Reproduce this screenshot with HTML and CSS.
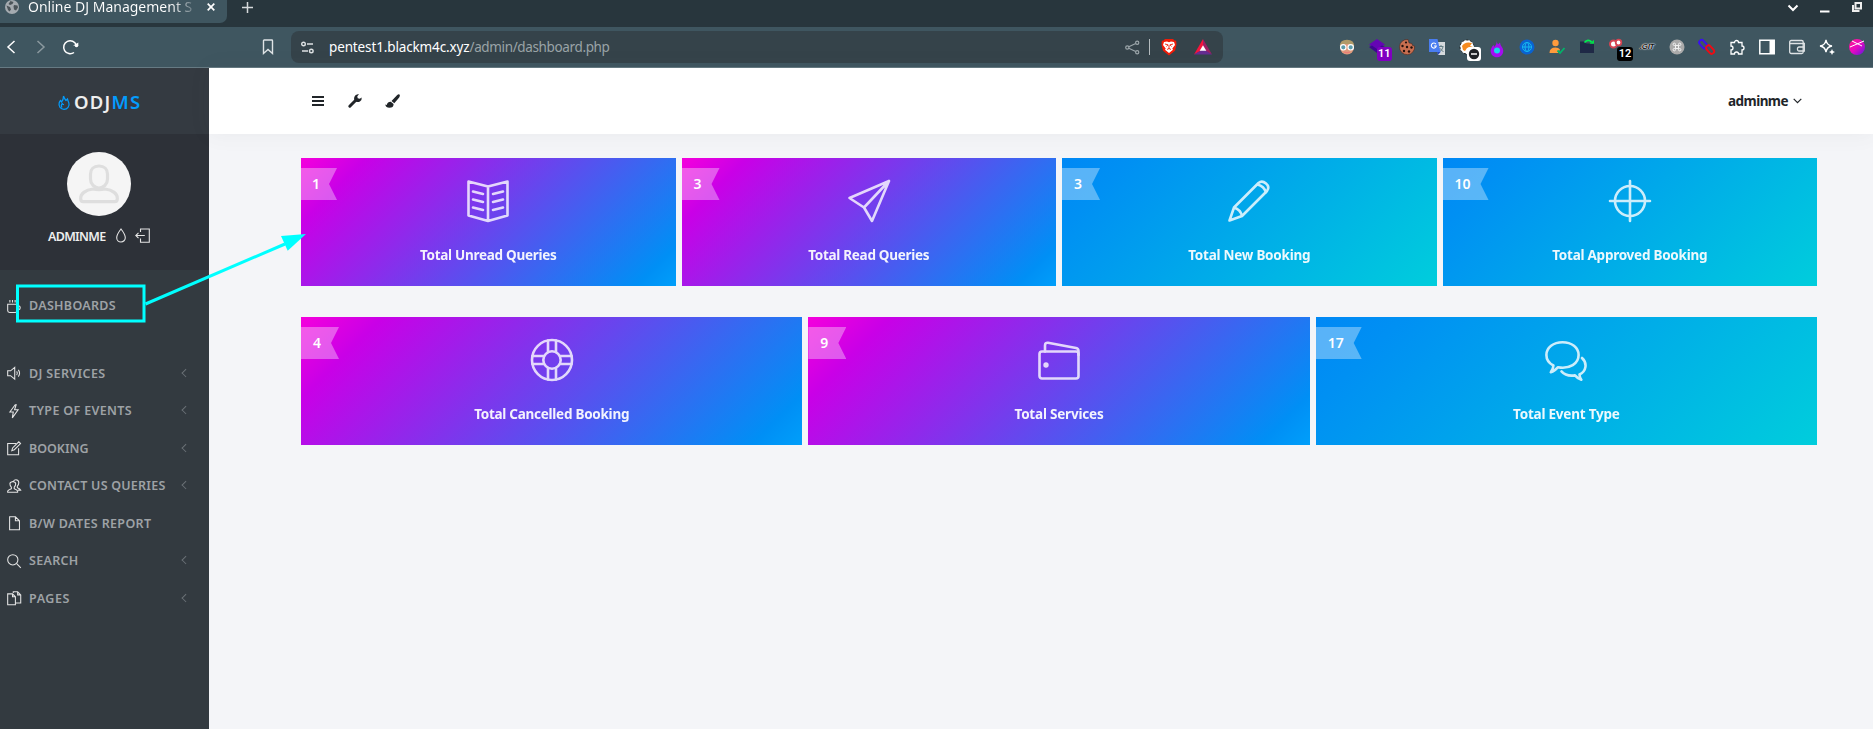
FILE: index.html
```html
<!DOCTYPE html>
<html lang="en">
<head>
<meta charset="utf-8">
<title>Online DJ Management System</title>
<link rel="stylesheet" href="styles.css">
</head>
<body>
<header class="browser">
  <div class="tabstrip">
    <div class="tab">
      <svg class="tab-globe" viewBox="0 0 14 14"><circle cx="7" cy="7" r="7" fill="#a5abb0"/><path d="M1.5 5.5L5 7l1 2.500-1.500 2L3 10zM5.500 1l3 1-1 2-2.500 1L3.500 4zM9 5l3.500.5.5 2-2 3-2-1-.5-3z" fill="#4b5459"/></svg>
      <span class="tab-title">Online DJ Management S</span>
      <svg class="tab-close" viewBox="0 0 8 8"><path d="M.7.700l6.600 6.600M7.300.7L.7 7.300" stroke="#fff" stroke-width="1.700"/></svg>
    </div>
    <svg class="new-tab" viewBox="0 0 11 11"><path d="M5.500 0v11M0 5.500h11" stroke="#d6dadc" stroke-width="1.500"/></svg>
    <div class="win-controls">
      <svg width="12" height="12" viewBox="0 0 12 12"><path d="M1.500 4.500L6 9l4.500-4.500" fill="none" stroke="#fff" stroke-width="2"/></svg>
      <svg width="12" height="12" viewBox="0 0 12 12"><path d="M1 10.500h9.500" stroke="#fff" stroke-width="2"/></svg>
      <svg width="12" height="12" viewBox="0 0 12 12"><path d="M4.500 2h5.500v5.500H4.500z M2 4v6h6.500" fill="none" stroke="#eee" stroke-width="2"/></svg>
    </div>
  </div>
  <div class="toolbar">
    <div class="nav-btns">
      <svg width="10" height="14" viewBox="0 0 10 14"><path d="M8.500 1L2 7l6.500 6" fill="none" stroke="#fff" stroke-width="1.500"/></svg>
      <svg width="10" height="14" viewBox="0 0 10 14"><path d="M1.500 1L8 7l-6.500 6" fill="none" stroke="#8b999f" stroke-width="1.500"/></svg>
      <svg width="17" height="16" viewBox="0 0 17 16"><path d="M12 13.500A6.500 6.500 0 1 1 14.300 6" fill="none" stroke="#fff" stroke-width="1.500"/><path d="M11 6.500h5.300V3.500l-1.500 1z" fill="#fff"/><circle cx="14.500" cy="6.500" r="1.800" fill="#fff"/></svg>
    </div>
    <svg class="bookmark" viewBox="0 0 12 16"><path d="M1.500 1.700q0-.7.700-.7h7.600q.7 0 .7.700V14.500L6 10.500 1.500 14.500z" fill="none" stroke="#dfe4e6" stroke-width="1.400"/></svg>
    <div class="urlbar">
      <svg class="tune" viewBox="0 0 13 13"><g fill="none" stroke="#dde1e3" stroke-width="1.400"><circle cx="2.500" cy="3" r="1.800"/><path d="M6 3h6M1 10h6"/><circle cx="10.300" cy="10" r="1.800"/></g></svg>
      <div class="url"><span class="host" data-w="140.500">pentest1.blackm4c.xyz</span><span class="path" data-w="140">/admin/dashboard.php</span></div>
      <div class="url-actions">
        <svg width="15" height="15" viewBox="0 0 15 15"><g fill="none" stroke="#9ca6aa" stroke-width="1.200"><circle cx="2.300" cy="7.500" r="1.600"/><circle cx="12.200" cy="2.800" r="1.600"/><circle cx="12.200" cy="12.200" r="1.600"/><path d="M3.800 6.800l6.900-3.300M3.800 8.200l6.900 3.300"/></g></svg>
        <i class="divider"></i>
        <svg class="brave" width="16" height="18" viewBox="0 0 16 18"><path d="M4 1h8l1.500 1.500 1.700.2.300 4-1.500 6L8 17.500 2 12.700.5 6.700l.3-4 1.700-.2z" fill="#f01c08"/><path d="M3 4l3-.5 2 .7 2-.7 3 .5 1 3-2.700 3.500.7 1.300L8 15l-4-3.200.7-1.300L2 7z" fill="#fff"/><path d="M4 6l3 .8L5.500 8.500M12 6l-3 .8 1.500 1.700M8 7v4M6 11.500l2-1 2 1" stroke="#f01c08" stroke-width=".9" fill="none"/></svg>
        <svg width="18" height="16" viewBox="0 0 18 16"><path d="M9 0L0 15.500 9 11z" fill="#f5153c"/><path d="M9 0l9 15.500L9 11z" fill="#9e1f63"/><path d="M0 15.500h18L9 10z" fill="#662d91"/><path d="M9 6.200l3.300 5.500H5.700z" fill="#fff"/></svg>
      </div>
    </div>
    <div class="extensions">
      <div class="ext"><svg viewBox="0 0 16 16"><circle cx="8" cy="8.500" r="7" fill="#e09a7c"/><path d="M.8 7Q1 .7 8 .7T15.200 7L12 5 4 5z" fill="#b09a68"/><circle cx="4.300" cy="8.300" r="2.700" fill="#5d9cab" stroke="#fff" stroke-width="1.200"/><circle cx="11.700" cy="8.300" r="2.700" fill="#5d9cab" stroke="#fff" stroke-width="1.200"/><path d="M5 13q3 1.500 6 0" stroke="#e77" fill="none"/></svg></div>
      <div class="ext"><svg viewBox="0 0 16 16"><path d="M8 0l8 5.500-8 5.500-8-5.500z" fill="#6405b4"/><path d="M0 8l3-1.500L8 10l5-3.500L16 8l-8 6z" fill="#3d0790"/></svg><b class="badge purple">11</b></div>
      <div class="ext"><svg viewBox="0 0 16 16"><path d="M9 .5A7.600 7.600 0 1 0 15.600 7l-2-.5-.8-2-2.800-.6z" fill="#c86f50" stroke="#492620" stroke-width=".6"/><g fill="#23110e"><circle cx="7" cy="3.500" r="1.100"/><circle cx="3.500" cy="7" r="1.200"/><circle cx="8" cy="8" r="1.200"/><circle cx="12.500" cy="8.500" r="1.200"/><circle cx="5" cy="12" r="1.200"/><circle cx="10" cy="12.500" r="1.200"/></g></svg></div>
      <div class="ext"><svg viewBox="0 0 16 16"><path d="M7 3h9v13H9z" fill="#d5d9dc"/><path d="M9.500 7.500h5M12 6v1.500M14 8q-1 4-4 5M10.500 9l4 4" stroke="#668087" fill="none"/><path d="M0 0h8.500l3 13H0z" fill="#4a7df0"/><path d="M8 13h3.500L9 16z" fill="#2a47b8"/><path d="M7 5.300A2.500 2.500 0 1 0 7.300 7H5" stroke="#fff" stroke-width="1.100" fill="none"/></svg></div>
      <div class="ext"><svg viewBox="0 0 16 16"><circle cx="8" cy="8" r="7" fill="#fff" stroke="#222" stroke-width="1" stroke-dasharray="2 2"/><path d="M3 7q3-5 10-3l-2 3 3 1-6 1-2 3-2-1z" fill="#f58a1f"/></svg><b class="badge white"><svg viewBox="0 0 14 14"><circle cx="7" cy="7" r="5.200" fill="#202226"/><path d="M4 7h6" stroke="#fff" stroke-width="1.500"/></svg></b></div>
      <div class="ext"><svg viewBox="0 0 16 16"><path d="M8 0q-1 3 1 5.500l2-2q0 2.500 2.500 5.500a6.300 6.300 0 1 1-11.500 1q1-3 2.500-4l1 2Q8 5 8 0" fill="#a50cf0"/><circle cx="8" cy="11.500" r="3" fill="#17d8e8"/></svg></div>
      <div class="ext"><svg viewBox="0 0 16 16"><circle cx="8" cy="8" r="7.500" fill="#0a63d0"/><g fill="none" stroke="#16b8ef"><circle cx="8" cy="8" r="4.500"/><ellipse cx="8" cy="8" rx="2" ry="4.500"/><path d="M3 8h10"/></g></svg></div>
      <div class="ext"><svg viewBox="0 0 16 16"><circle cx="6.500" cy="4" r="3.200" fill="#ff9a3c"/><path d="M.5 14q0-5.500 6-5.500 3 0 4.500 2L9 14z" fill="#ff9a3c"/><path d="M8.500 11.500l2.500 2.500 4.500-5" stroke="#00b56a" stroke-width="1.800" fill="none"/></svg></div>
      <div class="ext"><svg viewBox="0 0 16 16"><path d="M1 2.500h5l1.500 2H15V14H1z" fill="#1f2946"/><path d="M5.500 3.500q3.500-4 7-.5" stroke="#00f050" stroke-width="1.800" fill="none"/><path d="M10.500 4.800h4.500V.8z" fill="#00e048"/></svg></div>
      <div class="ext"><svg viewBox="0 0 16 16"><circle cx="4.500" cy="5" r="3.500" fill="#fff" stroke="#d54452" stroke-width="2"/><circle cx="9.500" cy="3.500" r="2.800" fill="#fff" stroke="#d54452" stroke-width="1.800"/></svg><b class="badge black">12</b></div>
      <div class="ext"><span class="git">.GIT</span></div>
      <div class="ext"><svg viewBox="0 0 16 16"><circle cx="8" cy="8" r="7.500" fill="#aaa"/><path d="M6.500 6.500h3v3h-3zM6.500 6.500H5.300a1.200 1.200 0 1 1 1.200-1.200zM9.500 6.500V5.300a1.200 1.200 0 1 1 1.200 1.200zM9.500 9.500h1.200a1.200 1.200 0 1 1-1.200 1.200zM6.500 9.500v1.200a1.200 1.200 0 1 1-1.200-1.200z" fill="none" stroke="#f2f2f2"/></svg></div>
      <div class="ext"><svg viewBox="0 0 16 16"><g fill="none" stroke-width="1.900"><rect x="-.5" y="2.500" width="9.500" height="5" rx="2.500" transform="rotate(48 4 5)" stroke="#3a10f0"/><rect x="6.300" y="8.300" width="9.500" height="5" rx="2.500" transform="rotate(48 11.300 10.800)" stroke="#f20a12"/></g></svg></div>
      <div class="ext"><svg viewBox="0 0 16 16"><path d="M2 3.500h3.500a2 2 0 1 1 4 0H13V7a2 2 0 1 1 0 4v4H9.500a2 2 0 0 0-4 0H2v-4a2 2 0 0 0 0-4z" fill="none" stroke="#fff" stroke-width="1.300"/></svg></div>
      <div class="ext"><svg viewBox="0 0 16 16"><path d="M.8 1.200h14.400v13.600H.8z" fill="none" stroke="#fff" stroke-width="1.500"/><path d="M10.500 1h5v14h-5z" fill="#fff"/></svg></div>
      <div class="ext"><svg viewBox="0 0 16 16"><g fill="none" stroke="#dfe3e5" stroke-width="1.300"><rect x=".7" y="1.500" width="13.500" height="13" rx="1.500"/><path d="M1 4.500h14.300V12H10a1.500 1.500 0 0 1-1.500-1.500v-1A1.500 1.500 0 0 1 10 8h5"/></g></svg></div>
      <div class="ext"><svg viewBox="0 0 16 16"><path d="M7 .8q.8 5.400 6 6.200-5.200.8-6 6.200-.8-5.400-6-6.200 5.200-.8 6-6.200z" fill="none" stroke="#fff" stroke-width="1.300"/><path d="M13 10q.4 2.600 3 3-2.600.4-3 3-.4-2.600-3-3 2.600-.4 3-3z" fill="#fff"/></svg></div>
      <div class="ext"><svg viewBox="0 0 16 16"><defs><linearGradient id="pf" x1="0" y1="0" x2="1" y2="1"><stop offset="0" stop-color="#ff1c8e"/><stop offset=".5" stop-color="#e808c0"/><stop offset="1" stop-color="#5a18e0"/></linearGradient></defs><circle cx="8" cy="8" r="8" fill="url(#pf)"/><path d="M1 8l14-6M3 2l10 5" stroke="#fff" stroke-width="1"/></svg></div>
    </div>
  </div>
</header>
<div class="app">
  <aside class="sidebar">
    <div class="brand">
      <svg width="12" height="15" viewBox="0 0 12 15"><path d="M5.500 1q1 3 2.500 4.500L9.500 4q.5 2 1.300 3.800c1.200 3.500-1.500 6.500-4.800 6.500S.2 11.500 1.200 8Q1.500 6.500 2.500 5.500l1 1.500Q5.500 5 5.500 1M4 12.500q-1.500-2 .3-4Q5 9.500 6 9.700" fill="none" stroke="#039cfd" stroke-width="1.200"/></svg>
      <span class="brand-name" data-w="67.500">ODJ<em>MS</em></span>
    </div>
    <div class="profile">
      <div class="avatar"><svg width="40" height="40" viewBox="0 0 40 40"><g fill="none" stroke="#dedede" stroke-width="3.200"><path d="M20 2c-5.500 0-8.500 3.500-8.500 8v5c0 5 4 9 8.500 9s8.500-4 8.500-9v-5c0-4.500-3-8-8.500-8z"/><path d="M14 25C6 26 1.700 30 1.700 34v1q0 2.600 2.600 2.600h31.400q2.600 0 2.600-2.600v-1c0-4-4.300-8-12.300-9q-6 1.500-12 0z"/></g></svg></div>
      <div class="profile-line">
        <span class="profile-name" data-w="57.500">ADMINME</span>
        <svg width="10" height="15" viewBox="0 0 10 15"><path d="M5 1Q.7 6.500.7 9.700a4.300 4.300 0 0 0 8.600 0Q9.300 6.500 5 1z" fill="none" stroke="#e4e4e4" stroke-width="1.100"/></svg>
        <svg class="logout" width="15" height="15" viewBox="0 0 15 15"><path d="M5.500 4V1h8.800v13.300H5.500v-3.800M.8 7.500h9M3.500 4.800L.8 7.500l2.700 2.700" fill="none" stroke="#e4e4e4" stroke-width="1.100"/></svg>
      </div>
    </div>
    <nav class="menu">
      <a class="item first"><svg viewBox="0 0 15 15"><path d="M.7 5.500h9.800V12q0 2-2 2h-5.800q-2 0-2-2zM10.500 7H12q1.700.3 1.700 2T12 11h-1.500M3 1v2.500M5.700 1v2.500M8.400 1v2.500"/></svg><span data-w="87">DASHBOARDS</span></a>
      <a class="item"><svg viewBox="0 0 15 15"><path d="M.7 5h3L8 1.500v12L3.700 10h-3zM10 5.500q1.500 2 0 4M11.700 4q2.600 3.500 0 7"/></svg><span data-w="76.500">DJ SERVICES</span><i></i></a>
      <a class="item"><svg viewBox="0 0 15 15"><path d="M8.500.8L3 8.200h3.500L5.500 14.300 11.500 6H7.800L9.500.8z"/></svg><span data-w="103">TYPE OF EVENTS</span><i></i></a>
      <a class="item"><svg viewBox="0 0 15 15"><path d="M9.500 2.500H.7v11.800H12V7.500M5 10l.8-2.800L12.200.8l1.800 1.800-6.400 6.400z"/></svg><span data-w="59.500">BOOKING</span><i></i></a>
      <a class="item"><svg viewBox="0 0 15 15"><path d="M4.500 8.500Q3 7 3 5t3-2.500S9 3 9 5 7.500 8.500 7.500 8.500V10q3 1 3.500 2.500v1.200H.7v-1.200Q1.500 11 4.500 10zM6.500 2.500Q7.500.7 9.200.7q3 0 3 3.200 0 2-1.500 3.500V9q3 1 3.500 2.500h-3"/></svg><span data-w="136.500">CONTACT US QUERIES</span><i></i></a>
      <a class="item"><svg viewBox="0 0 15 15"><path d="M2.700.8h6l4.200 4.200v9.300H2.700zM8.700.8V5h4.200"/></svg><span data-w="122.500">B/W DATES REPORT</span></a>
      <a class="item"><svg viewBox="0 0 15 15"><circle cx="6" cy="6" r="5.300"/><path d="M10 10l4.300 4.300"/></svg><span data-w="49.500">SEARCH</span><i></i></a>
      <a class="item"><svg viewBox="0 0 15 15"><path d="M.7 3h5l3 3v8.300h-8zM5.700 3v3h3M6.500 2V.8h4.500l3.200 3.200v8.500H9M11 .8V4h3.200"/></svg><span data-w="41">PAGES</span><i></i></a>
    </nav>
  </aside>
  <main class="main">
    <div class="topbar">
      <svg width="12" height="12" viewBox="0 0 12 12"><path d="M0 2h12M0 6h12M0 10h12" stroke="#212529" stroke-width="2"/></svg>
      <svg width="14" height="14" viewBox="0 0 14 14"><path d="M1.800 12.200L8 6" stroke="#212529" stroke-width="3" stroke-linecap="round"/><path d="M13.700 3.500a4 4 0 0 1-5.500 4.200A4 4 0 0 1 11 .3L9.300 2.300l.4 2 2 .5z" fill="#212529"/></svg>
      <svg class="brush" width="15" height="14" viewBox="0 0 15 14"><path d="M14.500.5q1 .8-.3 3L9.300 9.200 6.500 7 12 1.300q1.500-1.500 2.500-.8zM5.800 7.700l2.800 2.200q0 3.800-4.300 3.900Q1 13.800.2 10.500l1.500.5q1-3.500 4.100-3.300z" fill="#212529"/></svg>
      <div class="user"><span data-w="60">adminme</span><svg width="9" height="6" viewBox="0 0 9 6"><path d="M.7.800l3.800 3.800L8.300.8" fill="none" stroke="#212529" stroke-width="1.200"/></svg></div>
    </div>
    <div class="content">
      <section class="row">
        <div class="card pink"><b class="ribbon narrow">1</b><svg class="ico" viewBox="0 0 42 42"><path d="M21 6.500L1.500 1.500v34L21 41l19.500-5.500v-34zM21 6.500V41M6 11.500l10 2.500M6 19.500l10 2.500M6 27.500L16 30M36 11.500L26 14M36 19.500L26 22M36 27.500L26 30"/></svg><span data-w="136.500">Total Unread Queries</span></div>
        <div class="card pink"><b class="ribbon">3</b><svg class="ico" viewBox="0 0 42 42"><path d="M41 1L1.500 18 16 27.500 24 41zM41 1L16 27.500"/></svg><span data-w="121">Total Read Queries</span></div>
        <div class="card blue"><b class="ribbon">3</b><svg class="ico" viewBox="0 0 42 42"><path d="M1.500 40.500L6 27.500 30.500 3Q34 0 38 3.500T39 11L14 36zM6 27.500q6.500 2 8 8.500M29.500 4.500q6.500 1.500 8.500 8"/></svg><span data-w="122">Total New Booking</span></div>
        <div class="card blue"><b class="ribbon">10</b><svg class="ico" viewBox="0 0 42 42"><circle cx="21" cy="21" r="15"/><path d="M21 1v40M1 21h40"/></svg><span data-w="155">Total Approved Booking</span></div>
      </section>
      <section class="row">
        <div class="card pink"><b class="ribbon">4</b><svg class="ico" viewBox="0 0 42 42"><circle cx="21" cy="21" r="20"/><circle cx="21" cy="21" r="8.700"/><path d="M17 13V1.500M25 13V1.500M17 29v11.500M25 29v11.500M13 17H1.500M13 25H1.500M29 17h11.500M29 25h11.500"/></svg><span data-w="155">Total Cancelled Booking</span></div>
        <div class="card pink"><b class="ribbon">9</b><svg class="ico" viewBox="0 0 42 42"><rect x="1.500" y="12.500" width="39" height="27" rx="2.500"/><path d="M7 12.500V6.500q0-3 3-2.700L38 9q2.500.5 2.500 3v4"/><circle class="dot" cx="8" cy="26" r="2.700"/></svg><span data-w="89">Total Services</span></div>
        <div class="card blue"><b class="ribbon">17</b><svg class="ico" viewBox="0 0 42 42"><path d="M17.500 3.200C8.500 3.200 1.400 8.500 1.400 16c0 4.500 2.500 8.200 7 10.500 0 2.500-.9 4.500-2.600 6.700 3-.7 5.500-3 7-4.900 12 2.200 20.800-3.800 20.800-12.300 0-7.500-7-12.800-16.100-12.800z"/><path d="M37 19c5.500 5 4.500 13-2.500 16.500 0 2 .6 3.500 1.800 5.200-3-.7-4.800-2.500-6.300-4.300-6 .9-10.500-.5-13.500-4"/></svg><span data-w="106.500">Total Event Type</span></div>
      </section>
    </div>
  </main>
</div>
<svg class="annotation" viewBox="0 0 310 100"><rect x="17.500" y="56" width="126.500" height="35" fill="none" stroke="#0ff" stroke-width="3"/><path d="M145.500 74L285 14" stroke="#0ff" stroke-width="3"/><path d="M306 4l-25 2 6.700 14.700z" fill="#0ff"/></svg>
<script src="fit.js"></script>
</body>
</html>
```
FILE: fit.js
```js
// Tracks each label so that it fills its designed width.
document.querySelectorAll('[data-w]').forEach(function (el) {
  var n = el.textContent.length;
  var diff = parseFloat(el.dataset.w) - el.getBoundingClientRect().width;
  el.style.letterSpacing = (diff / n).toFixed(3) + 'px';
});
```
FILE: styles.css
```css
* { box-sizing: border-box; }
body { margin: 0; width: 1873px; height: 729px; overflow: hidden; position: relative; display: flex; flex-direction: column; font-family: "Noto Sans", "Open Sans", sans-serif; background: #f4f5f8; }
svg { display: block; flex: none; overflow: visible; }
em, i { font-style: normal; }

.browser { flex: none; height: 68px; }
.tabstrip { height: 27px; background: #28363d; display: flex; align-items: flex-start; }
.tab { width: 227px; height: 23px; background: #3f5660; border-radius: 0 0 7px 0; display: flex; align-items: center; padding: 0 11px 9px 5px; }
.tab-globe { width: 14px; height: 14px; }
.tab-title { margin-left: 9px; width: 167px; font-size: 14px; line-height: 14px; white-space: nowrap; padding-bottom: 4px; margin-bottom: -4px; background: linear-gradient(90deg, #fff 86%, rgba(255,255,255,.15) 100%); background-clip: text; -webkit-background-clip: text; color: transparent; }
.tab-close { width: 8px; height: 8px; margin-left: 12px; }
.new-tab { width: 11px; height: 11px; margin: 2px 0 0 15px; }
.win-controls { margin-left: auto; display: flex; gap: 20px; padding: 1px 10px 0 0; }
.toolbar { height: 41px; background: #3f5660; border-bottom: 1px solid #667a83; display: flex; align-items: center; padding: 0 1px 0 6px; }
.nav-btns { display: flex; align-items: center; gap: 20px; width: 256px; }
.nav-btns svg:last-child { margin-left: -4px; }
.bookmark { width: 12px; height: 16px; }
.urlbar { width: 932px; height: 32px; margin-left: 17px; background: #35434a; border-radius: 8px; display: flex; align-items: center; padding: 0 11px 0 10px; }
.tune { width: 13px; height: 13px; }
.url { margin-left: 15px; font-size: 13.500px; line-height: 20px; white-space: nowrap; display: flex; }
.host { color: #fff; }
.path { color: #9aa3a7; }
.url-actions { margin-left: auto; display: flex; align-items: center; }
.divider { width: 1px; height: 16px; background: #b5bcbf; margin: 0 11px 0 9px; }
.brave { margin-right: 17px; }
.extensions { margin-left: auto; display: flex; }
.ext { width: 30px; height: 32px; display: flex; align-items: center; justify-content: center; position: relative; }
.ext > svg { width: 16px; height: 16px; }
.badge { position: absolute; left: 15px; top: 16px; height: 14px; min-width: 14px; padding: 0 1px; border-radius: 3px; font: 600 11px/14px Roboto, sans-serif; color: #fff; text-align: center; }
.badge.purple { background: #8000c0; }
.badge.black { background: #000; min-width: 16px; }
.badge.white { background: #fff; padding: 0; }
.git { font: italic 900 8px/10px "Liberation Sans", sans-serif; color: #111; text-shadow: 0 0 1px #fff, 0 0 1px #fff, 0 0 2px #fff; letter-spacing: -.3px; }

.app { flex: 1; display: flex; min-height: 0; }
.sidebar { width: 209px; flex: none; background: #333a40; display: flex; flex-direction: column; }
.brand { height: 66px; background: #343a41; display: flex; align-items: center; padding-left: 58px; gap: 4px; }
.brand svg { margin-top: 3px; }
.brand-name { color: #eee; font-weight: 600; font-size: 18.500px; line-height: 28px; white-space: nowrap; margin-top: 2px; }
.brand-name em { color: #039cfd; }
.profile { height: 136px; background: #2d3138; display: flex; flex-direction: column; padding-top: 18px; }
.avatar { width: 64px; height: 64px; margin-left: 67px; border-radius: 50%; background: #f5f5f5; display: flex; align-items: flex-start; justify-content: center; padding-top: 12px; }
.profile-line { margin: 11px 0 0 48px; display: flex; align-items: center; }
.profile-name { color: #eee; font-size: 12.500px; font-weight: 600; line-height: 20px; white-space: nowrap; }
.profile-line svg { margin-left: 10px; margin-top: -3px; }
.profile-line .logout { margin-left: 9.500px; }
.menu { display: flex; flex-direction: column; padding-top: 17px; }
.item { height: 37.500px; display: flex; align-items: center; padding: 0 20.500px 0 7px; color: #9ea2a6; font-size: 12.500px; font-weight: 600; white-space: nowrap; }
.item.first { margin-bottom: 30px; }
.item svg { width: 14.500px; height: 14.500px; fill: none; stroke: #e4e4e4; stroke-width: 1.100; margin-right: 7.500px; }
.item i { width: 5.500px; height: 5.500px; border-left: 1.500px solid #6b7176; border-bottom: 1.500px solid #6b7176; transform: rotate(45deg); margin-left: auto; margin-top: -2px; }

.main { flex: 1; min-width: 0; }
.topbar { height: 66px; background: #fff; box-shadow: 0 0 20px rgba(80,80,80,.07); display: flex; align-items: center; padding: 0 71px 0 103px; }
.topbar > svg + svg { margin-left: 24px; }
.topbar > svg.brush { margin-left: 22.500px; }
.user { margin-left: auto; display: flex; align-items: center; gap: 5px; color: #212529; font-size: 13.500px; font-weight: 700; line-height: 20px; }
.content { padding: 24px 56px 0 92px; display: flex; flex-direction: column; gap: 31px; }
.row { display: flex; gap: 6px; }
.card { flex: 1 1 0; height: 128px; position: relative; display: flex; flex-direction: column; align-items: center; padding-top: 22px; color: #fff; }
.card.pink { background: linear-gradient(135deg, #f500dc 0, #c900e7 13%, #008ff5 92%, #009ffa 100%); }
.card.blue { background: linear-gradient(135deg, #0088f5 0, #0090f3 14%, #00cddc 100%); }
.ico { width: 42px; height: 42px; fill: none; stroke: #fff; stroke-width: 2.600; stroke-linejoin: round; stroke-linecap: round; opacity: .8; }
.ico .dot { fill: #fff; stroke: none; }
.card > span { margin-top: 23px; font-size: 13.500px; font-weight: 700; line-height: 20px; white-space: nowrap; opacity: .93; }
.ribbon { position: absolute; left: 0; top: 10px; height: 32px; padding: 0 18px 0 12px; background: rgba(255,255,255,.35); clip-path: polygon(0 0, 100% 0, calc(100% - 8px) 50%, 100% 100%, 0 100%); font-size: 14px; font-weight: 600; line-height: 32px; }
.ribbon.narrow { padding: 0 17px 0 11px; }

.annotation { position: absolute; left: 0; top: 230px; width: 310px; height: 100px; }
```
